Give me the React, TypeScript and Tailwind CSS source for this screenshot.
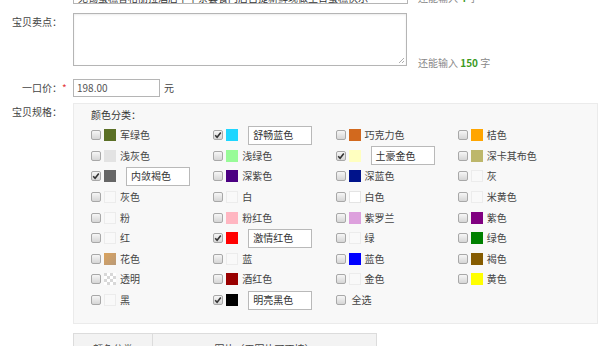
type Item = { n: string; c?: string; checked?: boolean; kind?: 'empty' | 'white' | 'flower' | 'clear' | 'none' }

const items: Item[] = [
  { n: '军绿色', c: '#5b7026' },
  { n: '舒畅蓝色', c: '#1ed6ff', checked: true },
  { n: '巧克力色', c: '#d2691e' },
  { n: '桔色', c: '#ffa500' },
  { n: '浅灰色', c: '#e3e3e3' },
  { n: '浅绿色', c: '#98fb98' },
  { n: '土豪金色', c: '#ffffc0', checked: true },
  { n: '深卡其布色', c: '#bdb76b' },
  { n: '内敛褐色', c: '#666666', checked: true },
  { n: '深紫色', c: '#4b0082' },
  { n: '深蓝色', c: '#00138b' },
  { n: '灰', kind: 'empty' },
  { n: '灰色', kind: 'empty' },
  { n: '白', kind: 'empty' },
  { n: '白色', kind: 'white' },
  { n: '米黄色', kind: 'empty' },
  { n: '粉', kind: 'empty' },
  { n: '粉红色', c: '#ffb6c1' },
  { n: '紫罗兰', c: '#dda0dd' },
  { n: '紫色', c: '#800080' },
  { n: '红', kind: 'empty' },
  { n: '激情红色', c: '#ff0000', checked: true },
  { n: '绿', kind: 'empty' },
  { n: '绿色', c: '#008000' },
  { n: '花色', kind: 'flower' },
  { n: '蓝', kind: 'empty' },
  { n: '蓝色', c: '#0000ff' },
  { n: '褐色', c: '#855b00' },
  { n: '透明', kind: 'clear' },
  { n: '酒红色', c: '#990000' },
  { n: '金色', kind: 'empty' },
  { n: '黄色', c: '#ffff00' },
  { n: '黑', kind: 'empty' },
  { n: '明亮黑色', c: '#000000', checked: true },
  { n: '全选', kind: 'none' },
]

function Checkbox({ checked }: { checked?: boolean }) {
  return (
    <span className="flex h-[10px] w-[10px] shrink-0 items-center justify-center rounded-[2px] border border-[#a8a8a8] bg-gradient-to-b from-[#f6f6f6] to-[#d6d6d6]">
      {checked && (
        <svg width="8" height="8" viewBox="0 0 8 8">
          <path d="M1.2 4.2 L3.1 6.2 L6.8 1.4" fill="none" stroke="#333" strokeWidth="1.6" />
        </svg>
      )}
    </span>
  )
}

function Swatch({ item }: { item: Item }) {
  if (item.kind === 'none') return null
  if (item.kind === 'clear')
    return (
      <svg width="12" height="12" viewBox="0 0 12 12" className="ml-[3px] shrink-0">
        <rect width="12" height="12" fill="#fff" />
        {[0, 3, 6, 9].map((y) =>
          [0, 3, 6, 9].map((x) =>
            (x + y) % 6 === 0 ? <rect key={x + '-' + y} x={x} y={y} width="3" height="3" fill="#d8d8d8" /> : null
          )
        )}
      </svg>
    )
  if (item.kind === 'flower')
    return <span className="ml-[3px] h-[12px] w-[12px] shrink-0 bg-gradient-to-br from-[#dba35c] to-[#b99a78]" />
  if (item.kind === 'empty')
    return <span className="ml-[3px] h-[12px] w-[12px] shrink-0 border border-[#ececec] bg-[#f9f9f9]" />
  if (item.kind === 'white')
    return <span className="ml-[3px] h-[12px] w-[12px] shrink-0 border border-[#e4e4e4] bg-white" />
  return <span className="ml-[3px] h-[12px] w-[12px] shrink-0" style={{ backgroundColor: item.c }} />
}

function ColorItem({ item }: { item: Item }) {
  return (
    <div className="flex h-[20.6px] items-center">
      <Checkbox checked={item.checked} />
      <Swatch item={item} />
      {item.checked ? (
        <div className="ml-[10px] flex h-[19px] w-[64px] items-center border border-[#b9b9b9] bg-white pl-[4px] text-[#333]">
          {item.n}
        </div>
      ) : (
        <span className={item.kind === 'none' ? 'ml-[6px]' : 'ml-[4px]'}>{item.n}</span>
      )}
    </div>
  )
}

export default function App() {
  return (
    <div className="h-[346px] overflow-hidden bg-white font-['Noto_Sans_CJK_SC','Liberation_Sans',sans-serif] text-[10px] leading-[14px] text-[#444]">
      {/* title row, scrolled off */}
      <div className="-mt-[16px] flex h-[20px] items-end">
        <div className="w-[73px] shrink-0" />
        <div className="h-[20px] w-[335px] overflow-hidden whitespace-nowrap border border-[#b5b5b5] bg-white pl-[4px] pt-[6px] text-[#333]">
          无锡蛋糕香格丽拉酒店下午茶套餐门店自提新鲜现做生日蛋糕快乐
        </div>
        <span className="mb-[-1px] ml-[10px] text-[#888]">
          还能输入 <b className="text-[#3c9a1e]">4</b> 字
        </span>
      </div>

      {/* selling point */}
      <div className="mt-[9px] flex">
        <div className="w-[62px] shrink-0 pt-[2px] text-right text-[#444]">宝贝卖点：</div>
        <div className="w-[11px] shrink-0" />
        <div className="relative h-[53px] w-[334px] border border-[#b5b5b5] bg-white shadow-[inset_0_1px_2px_rgba(0,0,0,0.08)]">
          <svg width="7" height="7" viewBox="0 0 7 7" className="absolute bottom-[1px] right-[1px]">
            <path d="M6 1 L1 6 M6 4 L4 6" stroke="#999" strokeWidth="0.8" />
          </svg>
        </div>
        <span className="mb-[-4px] ml-[11px] self-end text-[#888]">
          还能输入 <b className="text-[#3c9a1e]">150</b> 字
        </span>
      </div>

      {/* price */}
      <div className="mt-[13px] flex items-center">
        <div className="w-[62px] shrink-0 text-right text-[#444]">一口价：</div>
        <div className="w-[11px] shrink-0 text-[#e4393c]">*</div>
        <div className="flex h-[18px] w-[87px] items-center border border-[#b5b5b5] bg-white pl-[3px] text-[#555]">
          198.00
        </div>
        <span className="ml-[4px] text-[#444]">元</span>
      </div>

      {/* spec */}
      <div className="mt-[6px] flex">
        <div className="w-[62px] shrink-0 pt-[2px] text-right text-[#444]">宝贝规格：</div>
        <div className="w-[11px] shrink-0" />
        <div className="flex-1">
          <div className="mr-[2px] border border-[#ebebeb] bg-[#f8f8f8] pb-[13px] pl-[17px] pt-[4px]">
            <div className="h-[14px] text-[#333]">颜色分类：</div>
            <div className="mt-[3px] grid w-[489px] grid-cols-4 text-[#444]">
              {items.map((it) => (
                <ColorItem key={it.n} item={it} />
              ))}
            </div>
          </div>

          <div className="mt-[9px] flex w-[304px] border border-[#dcdcdc] bg-[#f3f3f3] text-[#444]">
            <div className="flex h-[26px] w-[79px] items-center justify-center border-r border-[#dcdcdc] pt-[4px]">
              颜色分类
            </div>
            <div className="flex h-[26px] flex-1 items-center justify-center pt-[4px]">图片（无图片可不填）</div>
          </div>
        </div>
      </div>
    </div>
  )
}
